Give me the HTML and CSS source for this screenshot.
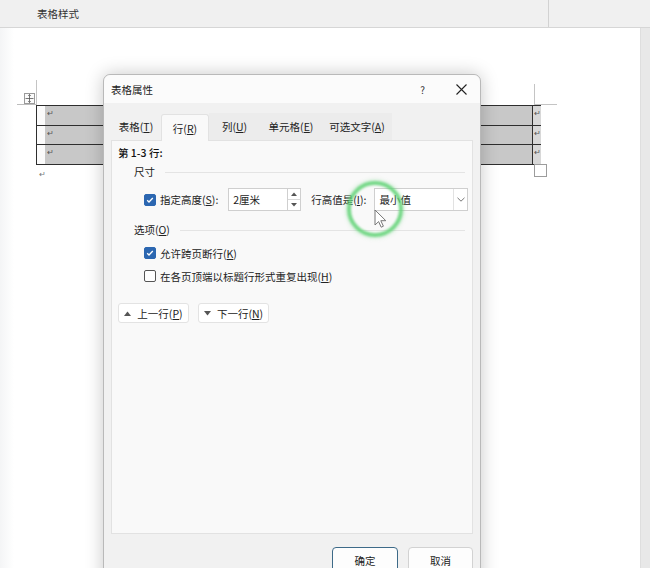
FILE: index.html
```html
<!DOCTYPE html>
<html lang="zh-CN">
<head>
<meta charset="utf-8">
<title>表格属性</title>
<link rel="stylesheet" href="styles.css">
</head>
<body>
<div class="topbar">
  <span class="topbar-label">表格样式</span>
  <span class="topbar-divider"></span>
</div>
<div class="workspace">
  <div class="page">
    <div class="tablewrap">
      <span class="move-handle">
        <svg width="9" height="9" viewBox="0 0 9 9"><path d="M4.5 0.5v8M0.5 4.5h8M3.2 1.8l1.3-1.3 1.3 1.3M3.2 7.2l1.3 1.3 1.3-1.3" fill="none" stroke="#555" stroke-width="0.8"/></svg>
      </span>
      <div class="table">
        <div class="trow"><span class="lead"></span><span class="cell"><span class="pmark">↵</span></span><span class="endmark">↵</span></div>
        <div class="trow"><span class="lead"></span><span class="cell"><span class="pmark">↵</span></span><span class="endmark">↵</span></div>
        <div class="trow last"><span class="lead"></span><span class="cell"><span class="pmark">↵</span></span><span class="endmark">↵</span></div>
      </div>
      <span class="resize-handle"></span>
      <div class="after-mark">↵</div>
    </div>
  </div>
  <div class="scrollstrip"></div>
</div>

<div class="dialog">
  <div class="titlebar">
    <span class="title">表格属性</span>
    <span class="help">?</span>
    <span class="close">
      <svg width="11" height="11" viewBox="0 0 11 11"><path d="M0.5 0.5l10 10M10.5 0.5l-10 10" stroke="#222" stroke-width="1.1"/></svg>
    </span>
  </div>
  <div class="dbody">
    <div class="tabs">
      <span class="tab t1"><span>表格(<u>T</u>)</span></span>
      <span class="tab t2 active"><span>行(<u>R</u>)</span></span>
      <span class="tab t3"><span>列(<u>U</u>)</span></span>
      <span class="tab t4"><span>单元格(<u>E</u>)</span></span>
      <span class="tab t5"><span>可选文字(<u>A</u>)</span></span>
    </div>
    <div class="panel">
      <div class="range">第 1-3 行:</div>
      <div class="group-title"><span class="gt">尺寸</span><span class="rule"></span></div>
      <div class="size-row">
        <span class="check on"><svg width="8" height="8" viewBox="0 0 8 8"><path d="M1.2 4.2l1.8 1.8 3.8-4" fill="none" stroke="#fff" stroke-width="1.3"/></svg></span>
        <span class="lbl">指定高度(<u>S</u>):</span>
        <span class="field">2厘米</span>
        <span class="spinner">
          <span class="spin-half"><svg width="6" height="4" viewBox="0 0 6 4"><path d="M0 4L3 0.5 6 4z" fill="#555"/></svg></span>
          <span class="spin-half"><svg width="6" height="4" viewBox="0 0 6 4"><path d="M0 0L3 3.5 6 0z" fill="#555"/></svg></span>
        </span>
        <span class="lbl lbl2">行高值是(<u>I</u>):</span>
        <span class="select"><span class="select-text">最小值</span><span class="select-btn"><svg width="8" height="5" viewBox="0 0 8 5"><path d="M0.5 0.8L4 4.2 7.5 0.8" fill="none" stroke="#666" stroke-width="0.9"/></svg></span></span>
      </div>
      <div class="group-title g2"><span class="gt">选项(<u>O</u>)</span><span class="rule"></span></div>
      <div class="opt-row">
        <span class="check on"><svg width="8" height="8" viewBox="0 0 8 8"><path d="M1.2 4.2l1.8 1.8 3.8-4" fill="none" stroke="#fff" stroke-width="1.3"/></svg></span>
        <span class="lbl">允许跨页断行(<u>K</u>)</span>
      </div>
      <div class="opt-row o2">
        <span class="check"></span>
        <span class="lbl">在各页顶端以标题行形式重复出现(<u>H</u>)</span>
      </div>
      <div class="nav-row">
        <span class="navbtn"><svg width="7" height="5" viewBox="0 0 7 5"><path d="M0 5L3.5 0.5 7 5z" fill="#555"/></svg><span class="navtxt">上一行(<u>P</u>)</span></span>
        <span class="navbtn"><svg width="7" height="5" viewBox="0 0 7 5"><path d="M0 0L3.5 4.5 7 0z" fill="#555"/></svg><span class="navtxt">下一行(<u>N</u>)</span></span>
      </div>
    </div>
    <div class="footer">
      <span class="btn primary">确定</span>
      <span class="btn">取消</span>
    </div>
  </div>
  <span class="click-ring"></span>
  <svg class="cursor" width="13" height="19" viewBox="0 0 13 19"><path d="M1 1v15l3.6-3.4 2.6 5.6 2.2-1-2.6-5.5h5z" fill="#fff" stroke="#777" stroke-width="1"/></svg>
</div>
</body>
</html>
```

FILE: styles.css
```css
* { box-sizing: border-box; }
html, body { margin: 0; padding: 0; }
body {
  width: 650px;
  height: 568px;
  overflow: hidden;
  position: relative;
  font-family: "Noto Sans CJK SC", "Noto Sans", sans-serif;
  font-size: 10.5px;
  color: #1c1c1c;
  background: #fff;
}
u { text-decoration: underline; text-underline-offset: 1px; }

.topbar {
  height: 28px;
  background: #f0f0f0;
  border-bottom: 1px solid #d6d6d6;
  display: flex;
  align-items: center;
}
.topbar-label { margin-left: 37px; color: #333; font-size: 10.5px; }
.topbar-divider {
  margin-left: auto;
  margin-right: 101px;
  width: 1px;
  align-self: stretch;
  background: #d2d2d2;
}

.workspace {
  display: flex;
  height: 540px;
}
.page {
  flex: 1;
  background: linear-gradient(90deg, #f4f5f6 0px, #ffffff 14px, #ffffff 100%);
  padding-top: 77px;
}
.scrollstrip {
  width: 10px;
  background: #e8e8e8;
  border-left: 1px solid #dedede;
}

.tablewrap {
  position: relative;
  margin-left: 36px;
  width: 505px;
}
.tablewrap::before {
  content: "";
  position: absolute;
  left: -19px;
  top: -1px;
  width: 20px;
  height: 1px;
  background: #bdbdbd;
}
.tablewrap::after {
  content: "";
  position: absolute;
  left: 0;
  top: -25px;
  width: 1px;
  height: 25px;
  background: #c4c4c4;
}
.move-handle {
  position: absolute;
  left: -12px;
  top: -12px;
  width: 11px;
  height: 11px;
  border: 1px solid #9a9a9a;
  background: #fafafa;
  display: flex;
  align-items: center;
  justify-content: center;
}
.table {
  width: 505px;
  position: relative;
}
.table::before {
  content: "";
  position: absolute;
  left: 498px;
  top: -21px;
  width: 1px;
  height: 21px;
  background: #c4c4c4;
}
.table::after {
  content: "";
  position: absolute;
  left: 498px;
  top: -1px;
  width: 23px;
  height: 1px;
  background: #c4c4c4;
}
.trow {
  display: flex;
  height: 19.5px;
  border-top: 1.5px solid #2e2e2e;
}
.trow.last { height: 21px; border-bottom: 1.5px solid #2e2e2e; }
.lead {
  width: 9px;
  background: #fbfbfb;
  border-left: 1.5px solid #2e2e2e;
}
.cell {
  width: 488px;
  background: #c8c8c8;
  border-right: 1.5px solid #2e2e2e;
  position: relative;
}
.pmark {
  position: absolute;
  left: 2px;
  top: 0px;
  font-size: 8px;
  color: #555;
  line-height: 14px;
}
.endmark {
  width: 8px;
  background: #d8d8d8;
  font-size: 8px;
  color: #555;
  line-height: 14px;
  text-align: center;
}
.resize-handle {
  position: absolute;
  left: 498px;
  top: 59px;
  width: 13px;
  height: 13px;
  border: 1px solid #9c9c9c;
  background: #fff;
}
.after-mark {
  margin-top: 3px;
  margin-left: 3px;
  font-size: 8px;
  color: #777;
}

.dialog {
  position: absolute;
  left: 103px;
  top: 74px;
  width: 378px;
  height: 520px;
  background: #f1f1f1;
  border: 1px solid #b9b9b9;
  border-radius: 7px 7px 0 0;
  box-shadow: 0 0 18px rgba(0, 0, 0, 0.22);
}
.titlebar {
  height: 28px;
  background: #fbfbfb;
  border-radius: 7px 7px 0 0;
  display: flex;
  align-items: center;
  padding-left: 7px;
}
.title { color: #222; }
.help { margin-left: auto; margin-right: 31px; color: #333; font-size: 10px; }
.close { margin-right: 13px; display: flex; }

.dbody { padding: 0 7px; }
.tabs {
  height: 37px;
  display: flex;
  align-items: flex-end;
}
.tab {
  height: 27px;
  display: flex;
  align-items: center;
  justify-content: center;
  color: #222;
  white-space: nowrap;
  flex: none;
}
.t1 { width: 50px; }
.t2 { width: 48px; }
.t3 { width: 51px; }
.t4 { width: 62px; }
.t5 { width: 70px; }
.t3, .t4, .t5 { background: #ececec; }
.tab.active {
  background: #f9f9f9;
  border: 1px solid #e2e2e2;
  border-bottom: none;
  border-radius: 3px 3px 0 0;
  position: relative;
  top: 1px;
}
.panel {
  height: 394px;
  background: #f9f9f9;
  border: 1px solid #e2e2e2;
  padding: 5px 6px;
}
.range { line-height: 13px; color: #111; font-weight: 500; }
.group-title {
  margin-top: 6px;
  padding-left: 16px;
  display: flex;
  align-items: center;
  line-height: 14px;
  color: #222;
}
.gt { white-space: nowrap; flex: none; }
.group-title .rule {
  flex: 1;
  height: 1px;
  background: #e4e4e4;
  margin-left: 10px;
  margin-right: 1px;
}
.g2 { margin-top: 12px; }
.size-row {
  margin-top: 9px;
  padding-left: 26px;
  display: flex;
  align-items: center;
  height: 23px;
}
.check {
  width: 12px;
  height: 12px;
  border: 1px solid #555;
  border-radius: 2px;
  background: #fff;
  display: flex;
  align-items: center;
  justify-content: center;
  flex: none;
}
.check.on { background: #2c67b1; border-color: #2c67b1; }
.lbl { margin-left: 4px; color: #222; white-space: nowrap; flex: none; }
.field {
  margin-left: 10px;
  width: 60px;
  height: 23px;
  background: #fff;
  border: 1px solid #cfcfcf;
  padding-left: 4px;
  line-height: 21px;
  flex: none;
}
.spinner {
  width: 13px;
  height: 23px;
  border: 1px solid #cfcfcf;
  border-left: none;
  background: #fff;
  display: flex;
  flex-direction: column;
  flex: none;
}
.spin-half {
  flex: 1;
  display: flex;
  align-items: center;
  justify-content: center;
}
.spin-half + .spin-half { border-top: 1px solid #d8d8d8; }
.lbl2 { margin-left: 10px; }
.select {
  margin-left: 8px;
  width: 94px;
  height: 23px;
  background: #fff;
  border: 1px solid #cfcfcf;
  display: flex;
  flex: none;
}
.select-text { flex: 1; padding-left: 4px; line-height: 21px; white-space: nowrap; }
.select-btn {
  width: 14px;
  border-left: 1px solid #e2e2e2;
  display: flex;
  align-items: center;
  justify-content: center;
}
.opt-row {
  margin-top: 8px;
  padding-left: 26px;
  height: 16px;
  display: flex;
  align-items: center;
}
.o2 { margin-top: 7px; }
.nav-row {
  margin-top: 19px;
  display: flex;
  gap: 9px;
}
.navbtn {
  width: 71px;
  height: 20px;
  background: #fff;
  border: 1px solid #e3e3e3;
  border-radius: 3px;
  display: flex;
  align-items: center;
  justify-content: center;
  gap: 6px;
  color: #222;
  flex: none;
}
.navtxt { white-space: nowrap; }
.footer {
  margin-top: 13px;
  display: flex;
  justify-content: flex-end;
  gap: 10px;
}
.btn {
  width: 65px;
  height: 27px;
  background: #fdfdfd;
  border: 1px solid #d2d2d2;
  border-radius: 4px;
  display: flex;
  align-items: center;
  justify-content: center;
  color: #222;
}
.btn.primary {
  width: 66px;
  border: 1.5px solid #3d6a88;
}
.click-ring {
  position: absolute;
  left: 243px;
  top: 106px;
  width: 56px;
  height: 56px;
  border-radius: 50%;
  border: 4px solid rgba(96, 210, 118, 0.85);
  filter: blur(0.8px);
  box-shadow: 0 0 4px rgba(96, 210, 118, 0.5);
}
.cursor {
  position: absolute;
  left: 270px;
  top: 134px;
}
```
